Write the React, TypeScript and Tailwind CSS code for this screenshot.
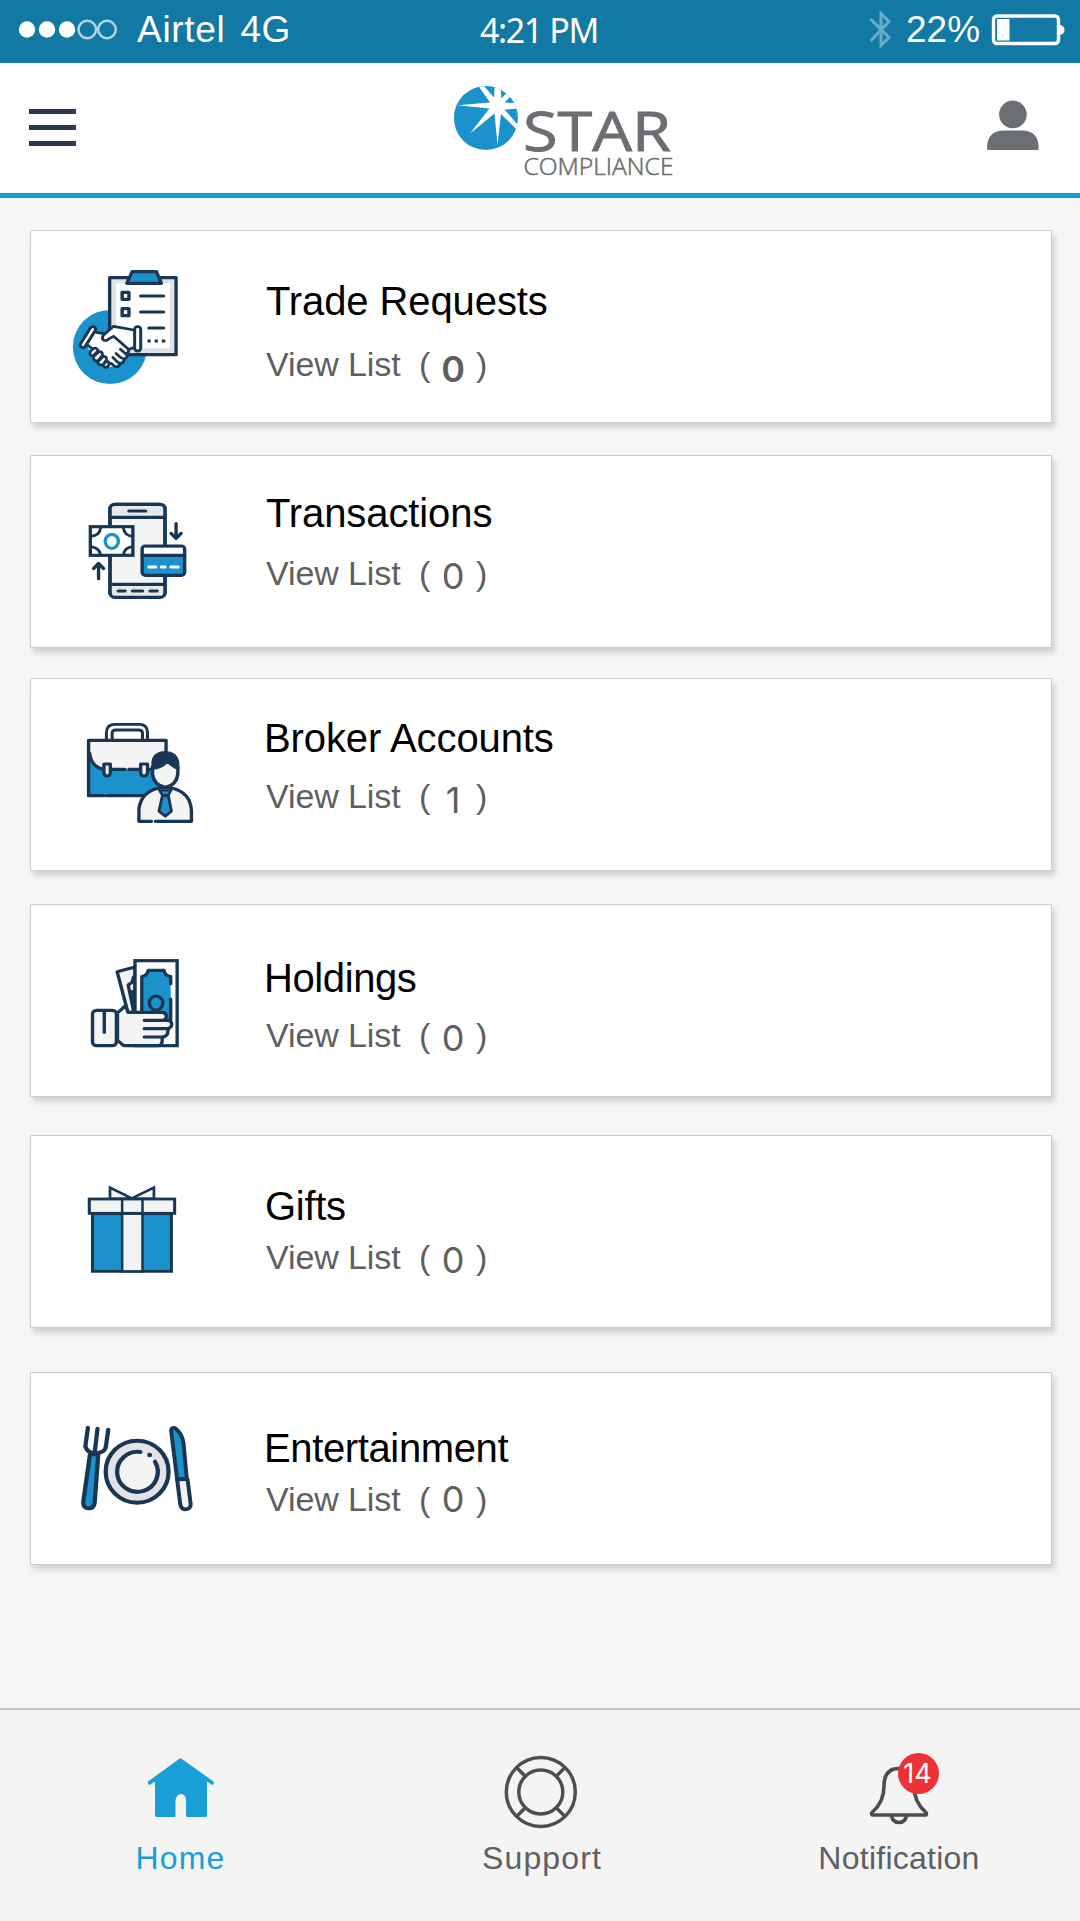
import React from "react";

const NAVY = "#193754";
const BLUE = "#1c92cc";
const PALE = "#f4f4f5";

function CardIcon({ top, children }: { top: number; children: React.ReactNode }) {
  return (
    <svg
      className="h-[191px] w-[200px] shrink-0"
      viewBox={`30.8 ${top} 560 573`}
      preserveAspectRatio="none"
      fill="none"
      stroke={NAVY}
      strokeWidth={9.5}
      strokeLinejoin="round"
      strokeLinecap="round"
    >
      {children}
    </svg>
  );
}

function TradeIcon() {
  return (
    <CardIcon top={33}>
      <ellipse cx="252" cy="381" rx="104" ry="111" fill={BLUE} stroke="none" />
      <rect x="251" y="173" width="186" height="231" fill="#dfe3e8" />
      <rect x="269" y="190" width="151" height="195" fill="#fff" stroke="none" />
      <path d="M299 190 314 155H382L396 190Z" fill={BLUE} />
      <rect x="286" y="217" width="19" height="21" fill="#fff" />
      <rect x="286" y="266" width="19" height="21" fill="#fff" />
      <path d="M338 228H402M338 276H402M361 324H402" />
      <path d="M357 363H366M377 363H386M397 363H407" strokeLinecap="butt" />
      <path d="M212 338 234 341 262 319 320 330V385L304 392 300 410 266 440 240 440 205 415 188 376Z" fill="#fff" stroke="none" />
      <rect x="321" y="320" width="17" height="73" rx="8" fill="#fff" strokeWidth="8.500" />
      <path d="M197 324Q203 317 210 322 213 326 211 331L182 380Q177 386 170 380 167 377 170 371Z" fill="#fff" strokeWidth="8.500" />
      <g strokeWidth="8">
        <path d="M214 337 234 341" />
        <path d="M319 330 262 319 234 345Q227 355 235 361 244 364 250 356L262 349 303 387Q307 399 296 401L281 388M296 401Q304 410 294 416 288 418 281 412L269 400M291 416Q294 426 284 430 276 431 269 422L260 412M281 430Q278 442 266 440L255 430M303 389 317 383" />
        <path d="M188 374 201 385" />
        <path d="M197 394 207 385Q215 383 218 390 217 396 205 407 193 408 197 394ZM208 407 221 395Q232 394 231 405L220 421Q206 426 206 413ZM220 423 233 409Q243 408 242 419L233 434Q220 437 218 428ZM233 433 242 424Q250 424 250 433L244 442Q235 443 233 436Z" fill="#fff" />
      </g>
    </CardIcon>
  );
}

function TransactionsIcon() {
  return (
    <CardIcon top={33}>
      <rect x="252" y="178" width="154" height="279" rx="14" fill={PALE} />
      <path d="M256 183H402V217H256ZM256 418H402V453H256Z" fill="#e5e9ea" stroke="none" />
      <rect x="252" y="178" width="154" height="279" rx="14" />
      <path d="M252 217H406M252 418H406M305 198H352M275 438H294M315 438H343M364 438H384" />
      <rect x="197" y="245" width="119" height="86" fill="#fff" strokeLinejoin="miter" />
      <path d="M197 274Q224 272 226 247M316 274Q292 272 289 247M197 305Q222 307 226 331M316 305Q292 307 289 331" strokeLinecap="butt" strokeWidth="8" />
      <ellipse cx="257" cy="289" rx="18.500" ry="21" stroke={BLUE} />
      <rect x="342" y="303" width="119" height="88" rx="9" fill={BLUE} />
      <path d="M347 308H456V331H347Z" fill="#fff" stroke="none" />
      <path d="M342 331H461" />
      <path d="M361 366H380M396 366H406M423 366H443" stroke="#fff" />
      <path d="M220 401V356M206 371 220 355 234 371M437 236V280M423 265 437 280 451 265" />
    </CardIcon>
  );
}

function BrokerIcon() {
  return (
    <CardIcon top={27}>
      <path d="M192 211H409V377H192Z" fill={BLUE} stroke="none" />
      <path d="M194 213H407V298H235Q196 290 194 240Z" fill={PALE} stroke="none" />
      <path d="M242 208V188Q242 163 266 163H334Q357 163 357 188V208M258 208V190Q258 180 268 180H333Q343 180 343 190V208" strokeWidth="8.500" />
      <path d="M235 377H192V211H409V246M244 377H352M195 250Q200 292 235 298M257 298H294M305 298H335M360 298H368" />
      <path d="M235 282H253V308Q252 318 244 318T235 308ZM338 282H357V308Q356 318 347 318T338 308Z" fill={PALE} />
      <path d="M333 454V418Q338 365 388 354H424Q476 368 480 420V454Z" fill={PALE} stroke="none" />
      <path d="M368 454H333V418Q338 368 386 355L407 352 427 355Q476 368 480 420V454H379" />
      <path d="M371 290V312Q375 346 407 352 438 346 442 312V290L413 265Z" fill={PALE} />
      <path d="M370 298V275Q374 246 407 245 438 246 444 275V298Q425 291 413 276 396 296 370 298Z" fill={NAVY} stroke={NAVY} strokeWidth="4" />
      <path d="M390 361H423L415 376H399Z" fill={BLUE} strokeWidth="7" />
      <path d="M399 376H415L424 424 407 439 389 424Z" fill={BLUE} strokeWidth="8" />
    </CardIcon>
  );
}

function HoldingsIcon() {
  return (
    <CardIcon top={30}>
      <path d="M322 216 272 230 302 352H322Z" fill={PALE} />
      <path d="M318 246 314 262 303 270 318 348M314 290 318 320" />
      <rect x="322" y="197" width="118" height="255" fill="#fff" strokeLinejoin="miter" />
      <path d="M341 350V245Q358 243 359 226H403Q405 243 422 245V376H341Z" fill={BLUE} stroke="none" />
      <path d="M341 350V245Q356 243 359 226H403Q406 243 422 245V266M422 312V374" />
      <ellipse cx="381" cy="324" rx="19" ry="21" />
      <path d="M273 354 296 331 302 352H398Q410 353 410 364 409 372 402 376H414Q425 379 425 388 424 398 414 401 417 424 398 427V440Q396 452 386 452H290L273 436Z" fill={PALE} />
      <path d="M348 376H412M348 401H410M348 426H400" stroke={PALE} strokeWidth="6" />
      <path d="M348 376H414M348 401H415M348 426H402" />
      <rect x="203" y="346" width="67" height="106" rx="11" fill={PALE} />
      <path d="M236 350V412" />
    </CardIcon>
  );
}

function GiftIcon() {
  return (
    <CardIcon top={33}>
      <g strokeLinejoin="miter" strokeLinecap="butt" strokeWidth="8.500">
        <path d="M252 221V188L313 220 375 188V221Z" fill={PALE} strokeWidth="7.500" />
        <rect x="203" y="266" width="221" height="173" fill={BLUE} />
        <rect x="286" y="266" width="57" height="173" fill={PALE} strokeWidth="7" />
        <rect x="194" y="222" width="239" height="43" fill={PALE} />
        <path d="M286 222V265M343 222V265" strokeWidth="7" />
      </g>
    </CardIcon>
  );
}

function DiningIcon() {
  return (
    <CardIcon top={24}>
      <path d="M196 268 177 412Q177 430 192 430T209 414L219 268Z" fill={BLUE} strokeWidth="12" />
      <path d="M190 188 183 244Q188 264 208 264 234 266 240 248L247 194M217 191 209 264" strokeWidth="12" />
      <ellipse cx="328" cy="320" rx="88" ry="93" fill="#e4e1e9" strokeWidth="12" />
      <ellipse cx="328" cy="320" rx="57" ry="60" fill={PALE} stroke="none" />
      <path d="M337 261A57 60 0 1 0 378 290" strokeWidth="12" />
      <circle cx="363" cy="270" r="7" fill={NAVY} stroke="none" />
      <path d="M423 196Q425 186 434 189 454 206 458 235L467 341 440 343Z" fill={BLUE} strokeWidth="11" />
      <path d="M440 344 449 420Q452 433 464 433 478 432 478 418L469 342Z" fill={PALE} strokeWidth="11" />
    </CardIcon>
  );
}

type Item = {
  title: string;
  count: number;
  icon: React.ReactNode;
  card: string;
  heading: string;
  row: string;
  digit: string;
};

const items: Item[] = [
  { title: "Trade Requests", count: 0, icon: <TradeIcon />, card: "mt-8", heading: "mt-[50px] tracking-[-0.1px]", row: "mt-[26px]", digit: "top-[5px] font-semibold" },
  { title: "Transactions", count: 0, icon: <TransactionsIcon />, card: "mt-8", heading: "mt-[37px] tracking-[-0.1px]", row: "mt-[23px]", digit: "top-[3px]" },
  { title: "Broker Accounts", count: 1, icon: <BrokerIcon />, card: "mt-[30px]", heading: "mt-[39px] -ml-[2px] tracking-[-0.1px]", row: "mt-[21px]", digit: "top-[4px]" },
  { title: "Holdings", count: 0, icon: <HoldingsIcon />, card: "mt-[33px]", heading: "mt-[53px] -ml-[2px] tracking-[-0.4px]", row: "mt-[20px]", digit: "top-[3px]" },
  { title: "Gifts", count: 0, icon: <GiftIcon />, card: "mt-[38px]", heading: "mt-[50px] -ml-px tracking-[-0.3px]", row: "mt-[14px]", digit: "top-[3px]" },
  { title: "Entertainment", count: 0, icon: <DiningIcon />, card: "mt-[44px]", heading: "mt-[55px] -ml-[2px] tracking-[-0.37px]", row: "mt-[14px]", digit: "top-0" },
];

function Card({ item }: { item: Item }) {
  return (
    <section className={`ml-[30px] flex h-[193px] w-[1022px] border border-[#cacccd] bg-white shadow-[3px_5px_6px_rgba(0,0,0,0.15)] ${item.card}`}>
      {item.icon}
      <div className="ml-[35px]">
        <h2 className={`text-[40px] leading-10 whitespace-nowrap text-black ${item.heading}`}>{item.title}</h2>
        <p className={`flex text-[34px] leading-[34px] whitespace-nowrap text-[#5f5f5f] ${item.row}`}>
          <span className="w-[153px] tracking-[-0.1px]">View List</span>
          <span className="w-[11px]">(</span>
          <span className={`relative w-[46px] text-center font-['Inter'] text-[36px] ${item.digit}`}>{item.count}</span>
          <span>)</span>
        </p>
      </div>
    </section>
  );
}

function StatusBar() {
  return (
    <div className="flex h-[63px] items-start bg-[#1179a4] text-white">
      <svg className="ml-4 h-[59px] w-[104px]" viewBox="16 0 104 59" fill="none">
        <circle cx="27" cy="29.500" r="8.200" fill="#fff" />
        <circle cx="47" cy="29.500" r="8.200" fill="#fff" />
        <circle cx="67" cy="29.500" r="8.200" fill="#fff" />
        <circle cx="87.300" cy="29.500" r="8.800" stroke="#b5d6e4" strokeWidth="2.400" />
        <circle cx="107" cy="29.500" r="8.800" stroke="#b5d6e4" strokeWidth="2.400" />
      </svg>
      <span className="ml-[17px] w-[343px] pt-[11px] text-[37px] leading-[38px] tracking-[0.7px]">
        Airtel<span className="ml-[15px] tracking-[0.3px]">4G</span>
      </span>
      <span className="w-[388px] pt-[11px] font-['Noto_Sans'] text-[34px] leading-[38px] tracking-[-1.4px]">4:21 PM</span>
      <svg className="h-[59px] w-[24px]" viewBox="868 0 24 59" fill="none" stroke="#69adc9" strokeWidth="3">
        <path d="M870.500 19 889 37.500 881 45.500V13.500L889 21.500 870.500 41" />
      </svg>
      <span className="ml-[14px] pt-[11px] text-[37px] leading-[38px]">22%</span>
      <svg className="ml-[10px] h-[59px] w-[76px]" viewBox="990 0 76 59" fill="none">
        <rect x="993.500" y="16" width="65" height="27.500" rx="3.500" stroke="#fff" strokeWidth="3.400" />
        <rect x="997" y="19" width="12.500" height="21.500" fill="#fff" />
        <path d="M1060 25Q1064.500 26 1064.500 30T1060 35Z" fill="#fff" />
      </svg>
    </div>
  );
}

function Logo() {
  return (
    <svg className="h-[130px] w-[236px]" viewBox="448 63 236 130">
      <defs>
        <clipPath id="disc">
          <circle cx="485.900" cy="118" r="32" />
        </clipPath>
      </defs>
      <circle cx="485.900" cy="118" r="32" fill={BLUE} />
      <path
        clipPath="url(#disc)"
        fill="#fff"
        d="M458 105.300 490 102.500 474 79.500 477 78 494 97.500 495.500 74 499.500 74 501.500 98.500 511 88 515 92 504.500 102.500 524 103.500V108.500L504.500 109.500 526 134 524 136.500 501 114 497.500 144.500 494.500 113.500 470 133.500 489.500 108.500Z"
      />
      <text x="523" y="150.500" fontFamily="Open Sans" fontSize="55.500" fill="#6b6e72" stroke="#6b6e72" strokeWidth="0.900" textLength="148" lengthAdjust="spacingAndGlyphs">
        STAR
      </text>
      <text x="523.500" y="175" fontFamily="Open Sans" fontWeight="300" fontSize="23" fill="#6b6e72" stroke="#6b6e72" strokeWidth="0.500" textLength="150" lengthAdjust="spacingAndGlyphs">
        COMPLIANCE
      </text>
    </svg>
  );
}

function Header() {
  return (
    <header className="flex h-[135px] items-start border-b-[5px] border-[#189fd8] bg-white">
      <div className="mt-[46px] ml-[29px] flex w-[47px] flex-col gap-[11px]">
        <div className="h-[5px] bg-[#2f3654]" />
        <div className="h-[5px] bg-[#2f3654]" />
        <div className="h-[5px] bg-[#2f3654]" />
      </div>
      <div className="ml-[372px]">
        <Logo />
      </div>
      <svg className="mt-[37px] mr-[40px] ml-auto h-[52px] w-[54px]" viewBox="986 100 54 52" fill="#6b6e72">
        <circle cx="1012.900" cy="114.400" r="13.800" />
        <path d="M987 148.500Q987 130.500 1004 130.500H1022Q1038.700 130.500 1038.700 148.500 1038.700 150 1037 150H988.500Q987 150 987 148.500Z" />
      </svg>
    </header>
  );
}

function BottomNav() {
  return (
    <nav className="mt-auto grid h-[213px] grid-cols-3 border-t-2 border-[#c4c5c6] bg-[#f4f4f4] text-[32px] leading-8 text-[#5f5f5f]">
      <div className="flex flex-col items-center pt-10 text-[#189fd8]">
        <svg className="h-20 w-20" viewBox="140 1750 80 80" fill="#189fd8">
          <path d="M180.500 1758 213.500 1781.500Q214.500 1784 212.500 1785L207 1781.500V1815.500Q207 1817 205.500 1817H187.500Q186 1817 186 1815.500V1800Q185.500 1794 181 1794T175.500 1800V1815.500Q175.500 1817 174 1817H156.500Q155 1817 155 1815.500V1781.500L149.500 1785Q147.500 1784 148 1781.500Z" />
        </svg>
        <span className="mt-3 ml-px tracking-[1.100px]">Home</span>
      </div>
      <div className="flex flex-col items-center pt-10">
        <svg className="h-20 w-20" viewBox="500 1750 80 80" fill="none" stroke="#4d4d4d" strokeWidth="3.400">
          <circle cx="540.800" cy="1792" r="34.500" />
          <circle cx="540.800" cy="1792" r="22" />
          <path d="M516.500 1767.500 525.500 1776.500M565 1767.500 556 1776.500M516.500 1816.500 525.500 1807.500M565 1816.500 556 1807.500" />
        </svg>
        <span className="mt-3 ml-1 tracking-[1.100px]">Support</span>
      </div>
      <div className="flex flex-col items-center pt-10">
        <div className="relative">
          <svg className="h-20 w-20" viewBox="860 1750 80 80" fill="none" stroke="#4d4d4d" strokeWidth="3.600" strokeLinejoin="round">
            <path d="M872 1815Q871 1813.500 872.500 1812 884 1802 884 1786 884 1768.500 899 1768.500T914 1786Q914 1802 925.500 1812 927 1813.500 926 1815Z" />
            <path d="M891.500 1816Q893 1822.500 899 1822.500T906.500 1816" />
          </svg>
          <span className="absolute top-[3px] left-[38px] flex size-[41px] items-center justify-center rounded-full bg-[#ec3237] pr-[2px] font-['Inter'] text-[27px] text-white">14</span>
        </div>
        <span className="mt-3 mr-[2px] tracking-[0.250px]">Notification</span>
      </div>
    </nav>
  );
}

export default function App() {
  return (
    <div className="flex h-[1921px] w-[1080px] flex-col overflow-hidden bg-[#f4f6f8] font-['Liberation_Sans',sans-serif]">
      <StatusBar />
      <Header />
      <main>
        {items.map((item) => (
          <Card key={item.title} item={item} />
        ))}
      </main>
      <BottomNav />
    </div>
  );
}
